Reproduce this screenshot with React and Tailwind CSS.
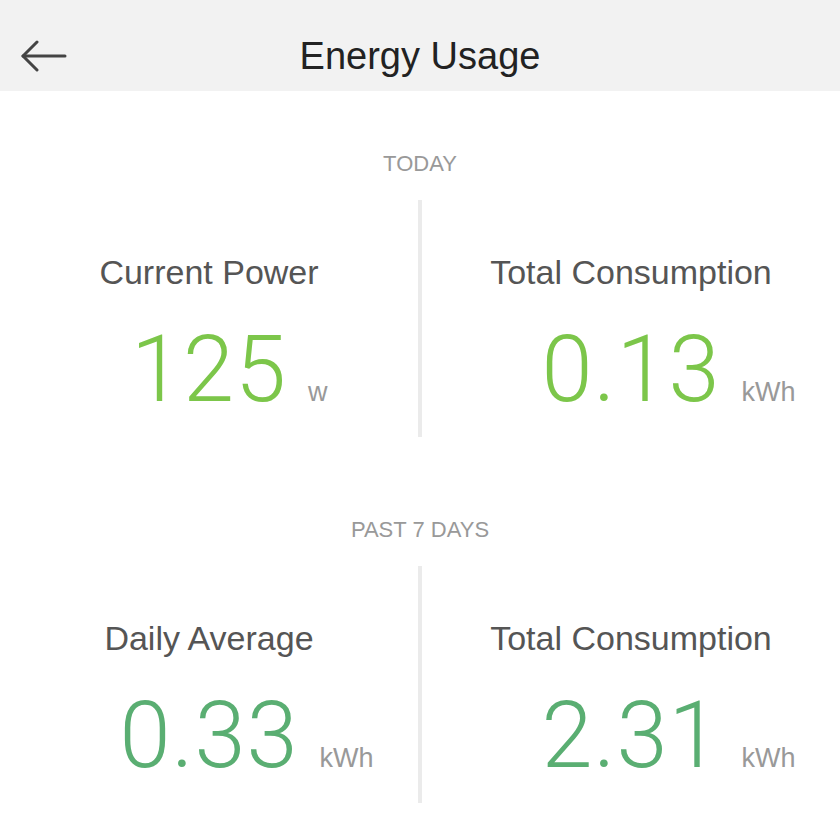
const sections = [
  {
    title: 'Today',
    tone: 'text-[#7cc64a]',
    stats: [
      { label: 'Current Power', value: '125', unit: 'w' },
      { label: 'Total Consumption', value: '0.13', unit: 'kWh' },
    ],
  },
  {
    title: 'Past 7 Days',
    tone: 'text-[#5aae72]',
    stats: [
      { label: 'Daily Average', value: '0.33', unit: 'kWh' },
      { label: 'Total Consumption', value: '2.31', unit: 'kWh' },
    ],
  },
]

function BackArrow() {
  return (
    <svg width="46" height="32" viewBox="0 0 46 32" fill="none" stroke="#444" strokeWidth="3" strokeLinecap="round" strokeLinejoin="round">
      <path d="M2 16 H44" />
      <path d="M16 2 L2 16 L16 30" />
    </svg>
  )
}

function Stat({ label, value, unit, tone }) {
  return (
    <div className="flex flex-col items-center">
      <div className="text-[34px] leading-[40px] text-[#555]">{label}</div>
      <div className={`mt-[33px] text-[92px] leading-[90px] font-light tracking-[1px] whitespace-nowrap font-['Roboto',sans-serif] ${tone}`}>
        {value}
        <span className="inline-block w-0 relative left-[21px] text-[27px] leading-none tracking-normal text-[#999] font-normal font-['Liberation_Sans',sans-serif]">
          {unit}
        </span>
      </div>
    </div>
  )
}

function Section({ title, tone, stats, first }) {
  return (
    <section className={first ? 'mt-[60px]' : 'mt-[80px]'}>
      <div className="text-center text-[22px] leading-[26px] uppercase text-[#999]">{title}</div>
      <div className="mt-[23px] grid grid-cols-[1fr_4px_1fr]">
        <div className="pt-[52px] pb-[22px]">
          <Stat {...stats[0]} tone={tone} />
        </div>
        <div className="bg-[#ebebeb]" />
        <div className="pt-[52px] pb-[22px]">
          <Stat {...stats[1]} tone={tone} />
        </div>
      </div>
    </section>
  )
}

export default function App() {
  return (
    <div className="w-[840px] h-[840px] bg-white font-['Liberation_Sans',Arial,sans-serif] overflow-hidden">
      <header className="h-[91px] pt-[20px] bg-[#f2f2f2] grid grid-cols-[1fr_auto_1fr] items-center">
        <div className="pl-[21px] flex items-center">
          <BackArrow />
        </div>
        <h1 className="text-[38px] leading-[44px] text-[#222]">Energy Usage</h1>
        <div />
      </header>
      {sections.map((s, i) => (
        <Section key={s.title} {...s} first={i === 0} />
      ))}
    </div>
  )
}
